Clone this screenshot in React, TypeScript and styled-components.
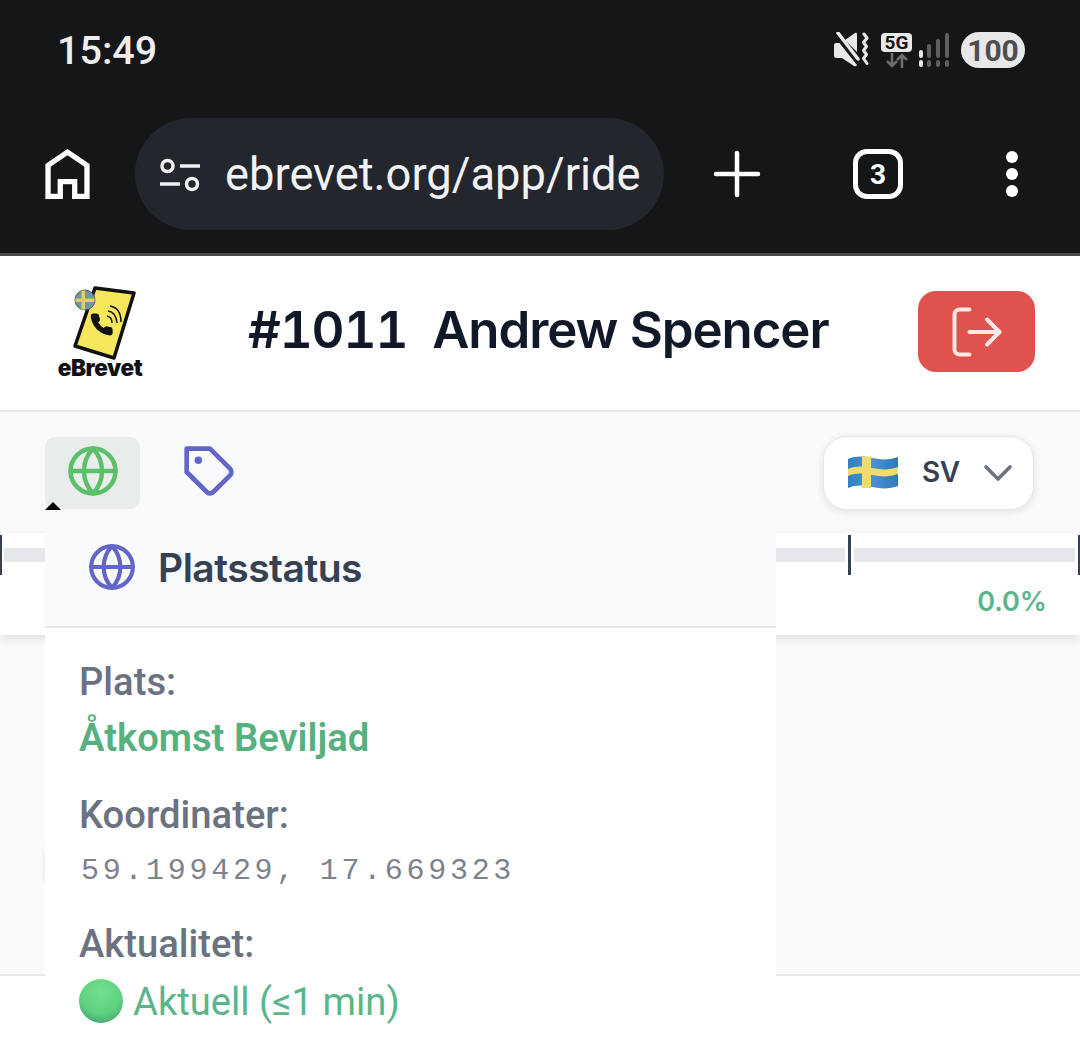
import React from "react";
import styled, { createGlobalStyle } from "styled-components";
import { Globe, LogOut, ChevronDown } from "lucide-react";

const GlobalStyle = createGlobalStyle`
  html, body {
    margin: 0;
    padding: 0;
    background: #fff;
  }
`;

const Page = styled.div`
  width: 1080px;
  height: 1047px;
  overflow: hidden;
  display: flex;
  flex-direction: column;
  font-family: Inter, "Noto Sans", sans-serif;
  background: #fff;
`;

/* phone + browser chrome */
const Chrome = styled.div`
  background: #151618;
  height: 253px;
  border-bottom: 3px solid #48494b;
  display: flex;
  flex-direction: column;
  flex-shrink: 0;
`;

const StatusBar = styled.div`
  height: 100px;
  padding: 0 55px 0 57px;
  display: flex;
  align-items: center;
  justify-content: space-between;
`;

const Clock = styled.div`
  font-family: Roboto, sans-serif;
  font-size: 39.5px;
  font-weight: 500;
  color: #efefef;
`;

const StatusIcons = styled.div`
  display: flex;
  align-items: center;
`;

const Battery = styled.div`
  width: 64px;
  height: 36px;
  margin-left: 11px;
  border-radius: 18px;
  background: #e8e8e8;
  color: #4e4e50;
  font-family: Roboto, sans-serif;
  font-size: 30px;
  font-weight: 700;
  display: flex;
  align-items: center;
  justify-content: center;
`;

const NetBadge = styled.div`
  width: 31px;
  display: flex;
  flex-direction: column;
  align-items: center;
  margin: 0 6px 0 12px;
`;

const FiveG = styled.div`
  width: 31px;
  height: 19px;
  border-radius: 4px;
  background: #e8e8e8;
  color: #151618;
  font-family: Roboto, sans-serif;
  font-size: 19px;
  font-weight: 700;
  line-height: 19px;
  text-align: center;
`;

const BrowserBar = styled.div`
  height: 112px;
  margin-top: 18px;
  padding-left: 45px;
  display: flex;
  align-items: center;
`;

const Omnibox = styled.div`
  width: 529px;
  height: 112px;
  margin-left: 45px;
  border-radius: 56px;
  background: #23262d;
  display: flex;
  align-items: center;
  padding-left: 24px;
  box-sizing: border-box;
  color: #f1f2f3;
  font-family: Roboto, sans-serif;
  font-size: 45.3px;
  white-space: nowrap;
`;

const UrlText = styled.span`
  margin-left: 22px;
`;

const ChromeActions = styled.div`
  display: flex;
  align-items: center;
  margin-left: 49px;
`;

const TabCount = styled.div`
  width: 50px;
  height: 50px;
  margin-left: 92px;
  box-sizing: border-box;
  border: 5px solid #fff;
  border-radius: 14px;
  color: #fff;
  font-family: Roboto, sans-serif;
  font-size: 28px;
  font-weight: 700;
  display: flex;
  align-items: center;
  justify-content: center;
`;

const MenuDots = styled.div`
  margin-left: 103px;
  display: flex;
  flex-direction: column;
  gap: 5px;

  span {
    width: 12px;
    height: 12px;
    border-radius: 50%;
    background: #fff;
  }
`;

/* app header */
const AppHeader = styled.header`
  height: 156px;
  flex-shrink: 0;
  box-sizing: border-box;
  padding: 0 45px 3px 45px;
  border-bottom: 2px solid #e5e7eb;
  display: flex;
  align-items: center;
`;

const LogoBox = styled.div`
  width: 115px;
  height: 120px;
  box-sizing: border-box;
  padding-top: 12px;
  display: flex;
  flex-direction: column;
  align-items: center;
`;

const LogoName = styled.div`
  margin: -8px 0 0 -5px;
  font-family: Inter, sans-serif;
  font-size: 22.5px;
  font-weight: 900;
  color: #111;
  letter-spacing: -0.4px;
`;

const Title = styled.h1`
  margin: 0 0 4px 88px;
  flex: 1;
  display: flex;
  gap: 25px;
  font-size: 51px;
  font-weight: 600;
  letter-spacing: -1.1px;
  color: #111827;
  white-space: nowrap;
  font-variant-numeric: tabular-nums;
`;

const LogoutButton = styled.button`
  width: 117px;
  height: 81px;
  border: none;
  border-radius: 18px;
  background: #e0524d;
  color: #fde8e6;
  display: flex;
  align-items: center;
  justify-content: center;
  padding: 0;
`;

/* main */
const Main = styled.main`
  flex: 1;
  background: #f8fafc;
  position: relative;
  display: flex;
  flex-direction: column;
  border-bottom: 2px solid #e5e7eb;
`;

const ToolRow = styled.div`
  height: 121px;
  flex-shrink: 0;
  box-sizing: border-box;
  padding: 25px 46px 0 45px;
  display: flex;
  align-items: flex-start;
`;

const ToolButton = styled.div<{ $active?: boolean }>`
  width: 95px;
  height: 72px;
  box-sizing: border-box;
  padding-bottom: 4px;
  border-radius: 10px;
  display: flex;
  align-items: center;
  justify-content: center;
  background: ${(p) => (p.$active ? "#e8edec" : "transparent")};
  color: ${(p) => (p.$active ? "#5cbf6a" : "#6366c8")};
  margin-right: 22px;
`;

const TagSvg = styled.svg`
  margin-top: 2px;
`;

const LangSelect = styled.div`
  margin-left: auto;
  margin-top: -1px;
  width: 211px;
  height: 74px;
  box-sizing: border-box;
  border: 1px solid #e5e7eb;
  border-radius: 24px;
  background: #fff;
  box-shadow: 0 2px 8px rgba(0, 0, 0, 0.1);
  display: flex;
  align-items: center;
  padding-left: 24px;
  color: #374151;
  font-size: 28px;
  font-weight: 600;
  letter-spacing: -0.5px;
`;

const LangCode = styled.span`
  margin: 0 14px 3px 24px;
`;

const ProgressCard = styled.section`
  height: 102px;
  flex-shrink: 0;
  background: #fff;
  box-shadow: 0 4px 10px rgba(0, 0, 0, 0.1);
  position: relative;
`;

const Track = styled.div`
  position: absolute;
  top: 15px;
  left: 4px;
  right: 4px;
  height: 14px;
  background: #e5e7eb;
`;

const Tick = styled.div<{ $edge?: boolean }>`
  position: absolute;
  top: 2px;
  width: 3px;
  height: 40px;
  background: #374151;
  box-shadow: 0 0 0 ${(p) => (p.$edge ? "2px" : "3px")} #fff;
`;

const Percent = styled.div`
  position: absolute;
  right: 33px;
  top: 52px;
  font-size: 27px;
  font-weight: 600;
  color: #5ab58a;
`;

// round control that sits mostly behind the tooltip, only its shadow shows
const HiddenControl = styled.div`
  position: absolute;
  left: 46px;
  top: 434px;
  width: 60px;
  height: 38px;
  border-radius: 8px;
  background: #fff;
  box-shadow: 0 0 6px rgba(0, 0, 0, 0.16);
`;

const Footer = styled.footer`
  height: 71px;
  flex-shrink: 0;
  background: #fff;
`;

/* tooltip */
const Popover = styled.div`
  position: absolute;
  top: 98px;
  left: 45px;
  width: 731px;
  height: 640px;
  background: #fff;
  z-index: 5;
`;

const PopoverArrow = styled.div`
  position: absolute;
  top: -8px;
  left: 0;
  width: 0;
  height: 0;
  border-left: 8px solid transparent;
  border-right: 8px solid transparent;
  border-bottom: 8px solid #000;
`;

const PopoverHead = styled.div`
  height: 118px;
  box-sizing: border-box;
  padding: 0 0 2px 42px;
  background: #f8fafc;
  border-bottom: 2px solid #e5e7eb;
  display: flex;
  align-items: center;
  gap: 21px;
  color: #6366c8;
`;

const PopoverTitle = styled.div`
  font-size: 39px;
  font-weight: 600;
  letter-spacing: -0.5px;
  color: #374151;
`;

const PopoverBody = styled.div`
  padding: 30px 34px 0 34px;
  font-family: Roboto, sans-serif;
`;

const Field = styled.div`
  margin-bottom: 22px;
`;

const Label = styled.div`
  font-size: 38.2px;
  font-weight: 500;
  line-height: 48px;
  color: #6b7280;
`;

const GrantedValue = styled.div`
  font-size: 38.2px;
  font-weight: 600;
  line-height: 64px;
  color: #56b07f;
  margin-bottom: -1px;
`;

const CoordValue = styled.div`
  font-family: "Liberation Mono", monospace;
  font-size: 30px;
  line-height: 64px;
  letter-spacing: 3.7px;
  padding-left: 2px;
  color: #7d828c;
  margin-bottom: -5px;
`;

const FreshValue = styled.div`
  display: flex;
  align-items: center;
  gap: 10px;
  font-size: 38.2px;
  line-height: 63px;
  color: #5ab58a;
`;

const FreshText = styled.span`
  padding-top: 3px;
`;

const GreenDot = styled.span`
  width: 44px;
  height: 44px;
  border-radius: 50%;
  background: radial-gradient(circle at 50% 30%, #72e08e 0%, #5fd27e 55%, #3f8f78 100%);
`;

const HomeIcon = () => (
  <svg width="45" height="50" viewBox="0 0 46 52" fill="none" stroke="#fff" strokeWidth="5.500" style={{ flexShrink: 0 }}>
    <path d="M2.750 49.250V17L23 3.300 43.250 17v32.250H30.500V34h-15v15.250Z" />
  </svg>
);

const TuneIcon = () => (
  <svg width="44" height="40" viewBox="0 0 44 40" fill="none" stroke="#f1f2f3" strokeWidth="3.500" style={{ flexShrink: 0 }}>
    <circle cx="8.500" cy="12" r="5.500" />
    <path d="M21 12h20M1 30h20" />
    <circle cx="33" cy="30" r="5.500" />
  </svg>
);

const PlusIcon = () => (
  <svg width="48" height="48" viewBox="0 0 48 48" fill="none" stroke="#fff" strokeWidth="4.500" strokeLinecap="round">
    <path d="M24 3v42M3 24h42" />
  </svg>
);

const TagIcon = () => (
  <TagSvg width="56" height="56" viewBox="0 0 24 24" fill="none" stroke="currentColor" strokeWidth="2">
    <path d="M20.590 13.410l-7.170 7.170a2 2 0 0 1-2.830 0L2 12V2h10l8.590 8.590a2 2 0 0 1 0 2.820z" strokeLinejoin="round" />
    <circle cx="7" cy="7" r="1.600" fill="currentColor" stroke="none" />
  </TagSvg>
);

const MuteIcon = () => (
  <svg width="36" height="36" viewBox="0 0 36 36" fill="none">
    <path d="M1 13q0-2 2-2h6l15 17v5q-1 2-3 1L9 26H3q-2 0-2-2Z" fill="#e8e8e8" />
    <path d="M12 8l10-7q2-1 2 1v18Z" fill="#e8e8e8" />
    <path d="M2 3l24 30" stroke="#151618" strokeWidth="3" />
    <path d="M5 1l20 26" stroke="#e8e8e8" strokeWidth="3.500" strokeLinecap="round" />
    <path d="M31 2l3 4-3.500 4.500 3 4-3 4 3 4-3 4 3.500 5" stroke="#e8e8e8" strokeWidth="3" strokeLinecap="round" strokeLinejoin="round" />
  </svg>
);

const ArrowsIcon = () => (
  <svg width="24" height="15" viewBox="0 0 24 15" fill="none" stroke="#6d6d6f" strokeWidth="2.600" style={{ marginTop: 1 }}>
    <path d="M7 0v13M2 8l5 5 5-5" />
    <path d="M17 15V2M12 7l5-5 5 5" />
  </svg>
);

const SignalIcon = () => (
  <svg width="32" height="36" viewBox="0 0 32 36" fill="none" strokeLinecap="round" strokeWidth="4">
    <path d="M3 20v4" stroke="#e8e8e8" />
    <path d="M11 14v10" stroke="#5f5f61" />
    <path d="M20 9v15" stroke="#5f5f61" />
    <path d="M29 3v21" stroke="#5f5f61" />
    <path d="M3 30v3" stroke="#e8e8e8" />
    <path d="M11 30v3M20 30v3M29 30v3" stroke="#5f5f61" />
  </svg>
);

const SwedenWavingFlag = () => (
  <svg width="50" height="38" viewBox="0 0 50 38" style={{ flexShrink: 0 }}>
    <defs>
      <linearGradient id="flagBlue" x1="0" y1="0" x2="1" y2="0">
        <stop offset="0" stopColor="#2f7fc4" />
        <stop offset="0.45" stopColor="#4a94d6" />
        <stop offset="1" stopColor="#2f78bd" />
      </linearGradient>
    </defs>
    <path d="M0 5c8-3 14-3 24-1s18 2 26-1v29c-8 3-16 3-26 1S8 31 0 34Z" fill="url(#flagBlue)" />
    <path d="M0 15c8-3 14-3 24-1s18 2 26-1v7c-8 3-16 3-26 1S8 19 0 22Z" fill="#efdc6e" />
    <path d="M14 2.500h9v31.500h-9Z" fill="#efdc6e" />
  </svg>
);

const LogoArt = () => (
  <svg width="90" height="78" viewBox="59 284 90 78" style={{ flexShrink: 0 }}>
    <path d="M96 288l39 5-20 65-39-12Z" fill="#f6e65c" stroke="#111" strokeWidth="3.500" strokeLinejoin="round" />
    <path
      transform="translate(90 312) scale(1.050)"
      d="M22 16.920v3a2 2 0 0 1-2.180 2 19.790 19.790 0 0 1-8.630-3.070 19.500 19.500 0 0 1-6-6 19.790 19.790 0 0 1-3.070-8.670A2 2 0 0 1 4.110 2h3a2 2 0 0 1 2 1.720 12.840 12.840 0 0 0 .7 2.810 2 2 0 0 1-.45 2.110L8.090 9.910a16 16 0 0 0 6 6l1.270-1.270a2 2 0 0 1 2.110-.45 12.840 12.840 0 0 0 2.810.7A2 2 0 0 1 22 16.920z"
      fill="#111"
      stroke="#111"
      strokeWidth="1"
    />
    <path d="M108 316q5 1 5 7M109 311q8 1 9 12M111 306q11 2 11 16" stroke="#111" strokeWidth="1.500" fill="none" />
    <circle cx="86" cy="300" r="10" fill="#6f97a8" stroke="#555" strokeWidth="1" />
    <path d="M76.500 298.500h19v3.500h-19ZM82.500 290.500h3.500v19h-3.500Z" fill="#e3cd6a" />
  </svg>
);

export default function App() {
  return (
    <Page>
      <GlobalStyle />
      <Chrome>
        <StatusBar>
          <Clock>15:49</Clock>
          <StatusIcons>
            <MuteIcon />
            <NetBadge>
              <FiveG>5G</FiveG>
              <ArrowsIcon />
            </NetBadge>
            <SignalIcon />
            <Battery>100</Battery>
          </StatusIcons>
        </StatusBar>
        <BrowserBar>
          <HomeIcon />
          <Omnibox>
            <TuneIcon />
            <UrlText>ebrevet.org/app/ride</UrlText>
          </Omnibox>
          <ChromeActions>
            <PlusIcon />
            <TabCount>3</TabCount>
            <MenuDots>
              <span />
              <span />
              <span />
            </MenuDots>
          </ChromeActions>
        </BrowserBar>
      </Chrome>

      <AppHeader>
        <LogoBox>
          <LogoArt />
          <LogoName>eBrevet</LogoName>
        </LogoBox>
        <Title>
          <span>#1011</span>
          <span>Andrew Spencer</span>
        </Title>
        <LogoutButton>
          <LogOut size={60} strokeWidth={1.600} />
        </LogoutButton>
      </AppHeader>

      <Main>
        <ToolRow>
          <ToolButton $active>
            <Globe size={54} strokeWidth={2} />
          </ToolButton>
          <ToolButton>
            <TagIcon />
          </ToolButton>
          <LangSelect>
            <SwedenWavingFlag />
            <LangCode>SV</LangCode>
            <ChevronDown size={48} strokeWidth={1.800} color="#6b7280" />
          </LangSelect>
        </ToolRow>

        <ProgressCard>
          <Track />
          <Tick $edge style={{ left: -1 }} />
          <Tick style={{ left: 848 }} />
          <Tick style={{ left: 1078 }} />
          <Percent>0.0%</Percent>
        </ProgressCard>

        <HiddenControl />

        <Popover>
          <PopoverArrow />
          <PopoverHead>
            <Globe size={50} strokeWidth={2} />
            <PopoverTitle>Platsstatus</PopoverTitle>
          </PopoverHead>
          <PopoverBody>
            <Field>
              <Label>Plats:</Label>
              <GrantedValue>Åtkomst Beviljad</GrantedValue>
            </Field>
            <Field>
              <Label>Koordinater:</Label>
              <CoordValue>59.199429, 17.669323</CoordValue>
            </Field>
            <Field>
              <Label>Aktualitet:</Label>
              <FreshValue>
                <GreenDot />
                <FreshText>Aktuell (≤1 min)</FreshText>
              </FreshValue>
            </Field>
          </PopoverBody>
        </Popover>
      </Main>
      <Footer />
    </Page>
  );
}
